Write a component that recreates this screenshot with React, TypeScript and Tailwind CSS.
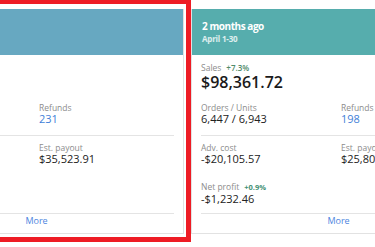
type Period = {
  title: string;
  range: string;
  header: string;
  sales: string;
  salesDelta: string;
  orders: string;
  refunds: string;
  advCost: string;
  payout: string;
  netProfit: string;
  netDelta: string;
};

const PERIODS: Period[] = [
  {
    title: "Last month",
    range: "May 1-31",
    header: "bg-[#67a8c1]",
    sales: "$104,118.09",
    salesDelta: "+5.8%",
    orders: "6,812 / 7,305",
    refunds: "231",
    advCost: "-$21,470.12",
    payout: "$35,523.91",
    netProfit: "-$1,101.37",
    netDelta: "+1.2%",
  },
  {
    title: "2 months ago",
    range: "April 1-30",
    header: "bg-[#56adad]",
    sales: "$98,361.72",
    salesDelta: "+7.3%",
    orders: "6,447 / 6,943",
    refunds: "198",
    advCost: "-$20,105.57",
    payout: "$25,802.14",
    netProfit: "-$1,232.46",
    netDelta: "+0.9%",
  },
];

function Label({ children }: { children: React.ReactNode }) {
  return <div className="text-[8.5px] leading-[10px] text-[#8c8c8c]">{children}</div>;
}

function Value({ children, blue }: { children: React.ReactNode; blue?: boolean }) {
  return (
    <div className={`text-[11px] leading-[12px] ${blue ? "text-[#3f7fd8]" : "text-[#222]"}`}>
      {children}
    </div>
  );
}

function PeriodCard({ p }: { p: Period }) {
  return (
    <div className="w-[295px] shrink-0 border border-t-0 border-[#e2e2e2] bg-white">
      <div className={`${p.header} h-[46px] px-[10px] pt-[11px] text-white`}>
        <div className="text-[10px] leading-[12px] font-bold tracking-[-0.45px]">{p.title}</div>
        <div className="mt-[2px] text-[8px] leading-[10px] font-bold tracking-[-0.2px] text-white/80">
          {p.range}
        </div>
      </div>

      <div className="px-[9px] pt-[8px] pb-[7px]">
        <div className="flex items-baseline gap-[5px]">
          <Label>Sales</Label>
          <span className="text-[8px] leading-[10px] font-semibold text-[#4f8a6a]">{p.salesDelta}</span>
        </div>
        <div className="text-[16px] leading-[18px] font-semibold text-[#1a1a1a]">{p.sales}</div>

        <div className="mt-[12px] grid grid-cols-[140px_1fr]">
          <div>
            <Label>Orders / Units</Label>
            <Value>{p.orders}</Value>
          </div>
          <div>
            <Label>Refunds</Label>
            <Value blue>{p.refunds}</Value>
          </div>
        </div>

        <div className="mt-[10px] border-t border-[#e4e4e4] pt-[7px]">
          <div className="grid grid-cols-[140px_1fr]">
            <div>
              <Label>Adv. cost</Label>
              <Value>{p.advCost}</Value>
            </div>
            <div>
              <Label>Est. payout</Label>
              <Value>{p.payout}</Value>
            </div>
          </div>

          <div className="mt-[17px] flex items-baseline gap-[5px]">
            <Label>Net profit</Label>
            <span className="text-[7.5px] leading-[10px] font-bold text-[#3f8f73]">{p.netDelta}</span>
          </div>
          <div className="mt-[1px]">
            <Value>{p.netProfit}</Value>
          </div>
        </div>

        <div className="mt-[8px] border-t border-[#e4e4e4] pt-[2px] text-center text-[9px] leading-[10px] text-[#4d86e0]">
          More
        </div>
      </div>
    </div>
  );
}

export default function App() {
  return (
    <div className="relative h-[247px] w-[375px] overflow-hidden bg-white font-['Open_Sans',sans-serif]">
      <div className="ml-[-111px] flex gap-[7px] pt-[9px]">
        {PERIODS.map((p) => (
          <PeriodCard key={p.title} p={p} />
        ))}
      </div>
      {/* highlight around the current card */}
      <div className="pointer-events-none absolute left-[-20px] top-[-1px] h-[243px] w-[211px] border-[5px] border-[#ee1c25]" />
    </div>
  );
}
